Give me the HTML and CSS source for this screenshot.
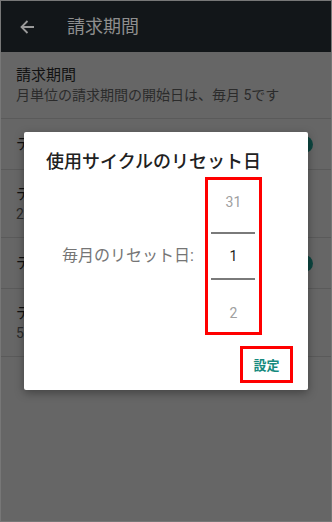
FILE: index.html
```html
<!DOCTYPE html>
<html lang="ja">
<head>
<meta charset="utf-8">
<link rel="stylesheet" href="styles.css">
</head>
<body>
<div class="screen">
  <div class="toolbar">
    <svg class="back" width="24" height="24" viewBox="0 0 24 24"><path d="M19 12H6.5M12.5 6L6.5 12L12.5 18" fill="none" stroke="#9a9a9a" stroke-width="1.8"/></svg>
    <div class="tb-title">請求期間</div>
  </div>
  <div class="list">
    <div class="item tall1">
      <div class="texts">
        <div class="it-title">請求期間</div>
        <div class="it-sub">月単位の請求期間の開始日は、毎月 5です</div>
      </div>
    </div>
    <div class="item short">
      <div class="texts"><div class="it-title">データ使用量の警告を設定</div></div>
      <div class="thumb"></div>
    </div>
    <div class="item tall">
      <div class="texts">
        <div class="it-title">データ警告</div>
        <div class="it-sub">2.00 GB のデータ使用量で警告</div>
      </div>
    </div>
    <div class="item short">
      <div class="texts"><div class="it-title">データ上限を設定</div></div>
      <div class="thumb"></div>
    </div>
    <div class="item tall">
      <div class="texts">
        <div class="it-title">データ上限</div>
        <div class="it-sub">5.00 GB</div>
      </div>
    </div>
  </div>
  <div class="scrim">
    <div class="dialog">
      <div class="dlg-title">使用サイクルのリセット日</div>
      <div class="dlg-body">
        <div class="label">毎月のリセット日:</div>
        <div class="picker">
          <div class="cell c1">31</div>
          <div class="rule"></div>
          <div class="cell c2">1</div>
          <div class="rule"></div>
          <div class="cell c3">2</div>
        </div>
      </div>
      <div class="actions">
        <div class="btn">設定</div>
      </div>
    </div>
  </div>
</div>
</body>
</html>
```
FILE: styles.css
```css
html, body {
  margin: 0;
  padding: 0;
}
body {
  font-family: Roboto, "Noto Sans CJK JP", sans-serif;
  background: #666666;
}
.screen {
  position: relative;
  width: 332px;
  height: 522px;
  box-sizing: border-box;
  border: 1px solid #777777;
  background: #666666;
  overflow: hidden;
}
.toolbar {
  height: 51px;
  background: #121619;
  display: flex;
  align-items: center;
}
.back {
  margin-left: 14px;
  display: block;
}
.tb-title {
  margin-left: 28px;
  font-size: 18px;
  color: #8e8e8e;
  line-height: 24px;
}
.item {
  display: flex;
  align-items: center;
  padding-left: 15px;
  border-bottom: 1px solid #5a5a5a;
  box-sizing: border-box;
}
.tall1 { height: 67px; }
.short { height: 51px; }
.tall { height: 68px; }
.texts {
  flex: 1;
  min-width: 0;
}
.it-title {
  font-size: 15px;
  line-height: 20px;
  color: #111111;
  white-space: nowrap;
}
.it-sub {
  font-size: 14px;
  line-height: 20px;
  color: #2b2b2b;
  white-space: nowrap;
}
.thumb {
  width: 17px;
  height: 17px;
  border-radius: 50%;
  background: #0c4640;
  margin-right: 18px;
  flex: none;
}
.scrim {
  position: absolute;
  inset: 0;
  display: flex;
  align-items: center;
  justify-content: center;
}
.dialog {
  width: 284px;
  height: 258px;
  background: #ffffff;
  border-radius: 2px;
  box-shadow: 0 3px 10px rgba(0,0,0,0.35);
  box-sizing: border-box;
  padding-top: 18px;
  display: flex;
  flex-direction: column;
  margin-top: -1px;
}
.dlg-title {
  font-size: 18px;
  line-height: 24px;
  color: #212121;
  padding-left: 22px;
  font-weight: 500;
}
.dlg-body {
  margin-top: 3px;
  display: flex;
  align-items: center;
  padding-left: 38px;
  gap: 11px;
}
.label {
  font-size: 16px;
  color: #757575;
  line-height: 20px;
}
.picker {
  width: 57px;
  height: 158px;
  box-sizing: border-box;
  border: 3px solid #ff0000;
  display: flex;
  flex-direction: column;
}
.cell {
  box-sizing: border-box;
  text-align: center;
  font-size: 14px;
  line-height: 20px;
  color: #a0a0a0;
}
.c1 { height: 52px; padding-top: 12px; }
.c2 { height: 44px; padding-top: 12px; color: #212121; }
.c3 { height: 52px; padding-top: 23px; }
.rule {
  height: 2px;
  margin: 0 4px 0 3px;
  background: #7a7a7a;
}
.actions {
  margin-top: 11px;
  display: flex;
  justify-content: flex-end;
  padding-right: 15px;
}
.btn {
  width: 53px;
  height: 37px;
  box-sizing: border-box;
  border: 3px solid #ff0000;
  display: flex;
  align-items: center;
  justify-content: center;
  font-size: 13px;
  font-weight: 700;
  color: #168a7e;
}
```
